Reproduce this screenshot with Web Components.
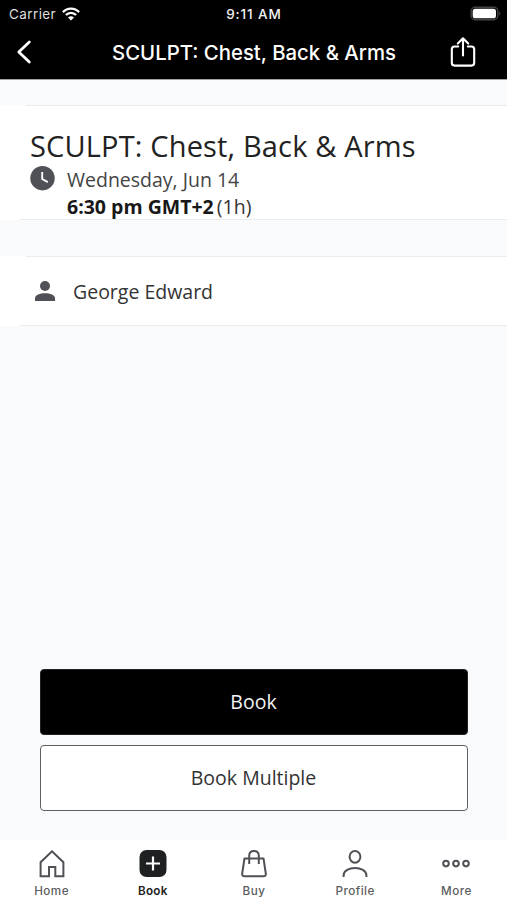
<!DOCTYPE html>
<html lang="en"><head><meta charset="utf-8"><title>Class details</title>
<style>html,body{margin:0;height:100%;background:#f8fafc}body{overflow:hidden}</style></head><body>
<booking-screen></booking-screen>
<script>
const define = (name, html) => {
  const t = document.createElement('template'); t.innerHTML = html;
  customElements.define(name, class extends HTMLElement {
    constructor(){ super(); this.attachShadow({mode:'open'}).append(t.content.cloneNode(true)); }
  });
};
define('status-bar', `<style>
:host{display:grid;grid-template-columns:1fr auto 1fr;align-items:center;height:27px;padding:0 5px 0 9px;color:#f2f2f2;font:400 13.5px/27px Inter,sans-serif;box-sizing:border-box}
.l{display:flex;align-items:center;gap:6px}.l span{letter-spacing:.4px;color:#ddd}
.l span,.t{padding-top:1px}
.t{font-weight:500;letter-spacing:.9px;margin-right:3px}.r{display:flex;justify-content:flex-end}svg{display:block}</style>
<div class="l"><span>Carrier</span><svg width="18" height="14" viewBox="0 0 18 14" fill="none" stroke="#fff" stroke-width="2.3"><path d="M.9 5.1C5.3.5 12.7.5 17.1 5.1M3.9 8C6.8 5.1 11.2 5.1 14.1 8"/><path d="M9 13.4 6 10.4Q9 7.9 12 10.4Z" fill="#fff" stroke="none"/></svg></div>
<div class="t">9:11 AM</div>
<div class="r"><svg width="32" height="16" viewBox="0 0 32 16"><rect x="1.2" y="1.2" width="26.6" height="12.6" rx="4" fill="#000" stroke="#444" stroke-width="1.4"/><rect x="2.7" y="2.7" width="23.3" height="9.6" rx="2.6" fill="#fff"/><path d="M29.3 5.2q2 2.2 0 4.6Z" fill="#555"/></svg></div>`);
define('nav-bar', `<style>
:host{display:grid;grid-template-columns:60px 1fr 60px;align-items:center;height:52px;padding-bottom:2px;box-sizing:border-box;color:#fff;font:500 20.35px/50px Inter,sans-serif}
.title{text-align:center;white-space:nowrap;padding-left:1px}svg{display:block}.b{margin-left:15px;margin-top:-1px}.s{margin-left:2px;margin-top:-1px}</style>
<svg class="b" width="18" height="26" viewBox="0 0 18 26" fill="none" stroke="#fff" stroke-width="2.8" stroke-linecap="round" stroke-linejoin="round"><path d="M14.3 3 3.8 13 14.3 23"/></svg>
<div class="title" style="padding-top:1px"><slot></slot></div>
<svg class="s" width="28" height="32" viewBox="0 0 28 32" fill="none" stroke="#fff" stroke-width="2.1" stroke-linecap="round" stroke-linejoin="round"><path d="M9.2 10.5H5.6Q2.8 10.5 2.8 13.3V26.8Q2.8 29.6 5.6 29.6H22.4Q25.2 29.6 25.2 26.8V13.3Q25.2 10.5 22.4 10.5H18.8M14 19.5V2.5M8.8 7.6 14 2.3 19.2 7.6"/></svg>`);
define('info-card', `<style>
:host{display:block;background:linear-gradient(#e9ebec,#e9ebec) 26px 0/100% 1px no-repeat,linear-gradient(#e9ebec,#e9ebec) 20px 100%/100% 1px no-repeat,#fff;box-sizing:border-box;color:#222;font-family:"Open Sans",sans-serif}</style><slot></slot>`);
define('class-summary', `<style>
:host{display:block;padding:21px 0 0 30px}
h1{font-size:29px;font-weight:400;line-height:40px;margin:0;letter-spacing:.16px;white-space:nowrap;color:#222}
.row{display:flex;gap:12px}svg{display:block}
.w{font-size:19.5px;line-height:27px;white-space:nowrap;color:#333}.d{color:#444}b{color:#181818;font-weight:700}.h{margin-left:-2px}</style>
<h1>SCULPT: Chest, Back &amp; Arms</h1><div class="row">
<svg width="25" height="25" viewBox="0 0 25 25"><circle cx="12.5" cy="12.2" r="12.2" fill="#505156"/><path d="M12.2 6V13L17.8 16.1" fill="none" stroke="#fff" stroke-width="1.9"/></svg>
<div class="w"><div class="d">Wednesday, Jun 14</div><div><b>6:30 pm GMT+2</b><span class="h"> (1h)</span></div></div></div>`);
define('instructor-row', `<style>
:host{display:flex;align-items:center;gap:18px;height:70px;padding-left:35px;font-size:19.5px;color:#333}svg{display:block}</style>
<svg width="20" height="20" viewBox="0 0 20 20" fill="#505156"><circle cx="10" cy="5" r="5"/><path d="M0 20V17.3C0 10.6 20 10.6 20 17.3V20Z"/></svg><slot></slot>`);
define('action-button', `<style>
:host{display:block}button{display:block;width:100%;height:66px;margin:0;padding:0 1px 1px 0;border:1.5px solid #5d6060;border-radius:4px;background:#fff;color:#333;font:400 19.5px "Open Sans",sans-serif}
:host([primary]) button{background:#000;color:#f4f4f4;border:1px solid #222}</style><button><slot></slot></button>`);
define('tab-item', `<style>
:host{display:flex;flex-direction:column;align-items:center;color:#5b5d60;font:500 11.7px/16px Inter,sans-serif}
:host([active]){color:#222;font-weight:600}::slotted(svg){display:block;margin-bottom:5px}.n{letter-spacing:.45px}:host([active]) .n{letter-spacing:.3px}</style><slot name="icon"></slot><div class="n"><slot></slot></div>`);
define('tab-bar', `<style>
:host{display:grid;grid-template-columns:repeat(5,1fr);height:60px;box-sizing:border-box;padding:9px 0 0 1px;background:#fff}
svg{fill:none;stroke:#505156;stroke-width:2;stroke-linejoin:round}</style>
<tab-item><svg slot="icon" width="30" height="29" viewBox="0 0 30 29"><path d="M3.6 27.3V13.2L15 2.3 26.4 13.2V27.3H18.3V18H12V27.3Z" stroke-linejoin="miter"/></svg>Home</tab-item>
<tab-item active><svg slot="icon" width="30" height="29" viewBox="0 0 30 29"><rect x="1.5" y="1" width="27" height="27" rx="7" fill="#1e2022" stroke="none"/><path d="M15 7.5V21.5M8 14.5H22" stroke="#fff" stroke-width="2.2"/></svg>Book</tab-item>
<tab-item><svg slot="icon" width="30" height="29" viewBox="0 0 30 29"><path d="M5.5 9.4H24.5L26.8 24.5Q27.1 27.3 24.5 27.3H5.5Q2.9 27.3 3.2 24.5ZM10.2 15V6.7Q10.2 2 15 2T19.8 6.7V15"/></svg>Buy</tab-item>
<tab-item><svg slot="icon" width="30" height="29" viewBox="0 0 30 29"><ellipse cx="15" cy="7.8" rx="5.4" ry="5.9"/><path d="M3.6 28V26.5C3.6 16.5 26.4 16.5 26.4 26.5V28"/></svg>Profile</tab-item>
<tab-item><svg slot="icon" width="30" height="29" viewBox="0 0 30 29"><circle cx="5" cy="14.6" r="2.8"/><circle cx="15" cy="14.6" r="2.8"/><circle cx="25" cy="14.6" r="2.8"/></svg>More</tab-item>`);
define('booking-screen', `<style>
:host{display:flex;flex-direction:column;height:900px;background:#f8fafc}
header{background:#000;height:79px;border-bottom:1px solid #a0a1a2;box-sizing:content-box;flex:none}
main{flex:1;display:flex;flex-direction:column;padding-top:25px}
.one{height:115px}.two{height:70px;margin-top:36px}
.actions{margin:auto 39px 29px 40px;display:grid;gap:10px}</style>
<header><status-bar></status-bar><nav-bar>SCULPT: Chest, Back &amp; Arms</nav-bar></header>
<main><info-card class="one"><class-summary></class-summary></info-card>
<info-card class="two"><instructor-row>George Edward</instructor-row></info-card>
<div class="actions"><action-button primary>Book</action-button><action-button>Book Multiple</action-button></div></main>
<tab-bar></tab-bar>`);
</script></body></html>
